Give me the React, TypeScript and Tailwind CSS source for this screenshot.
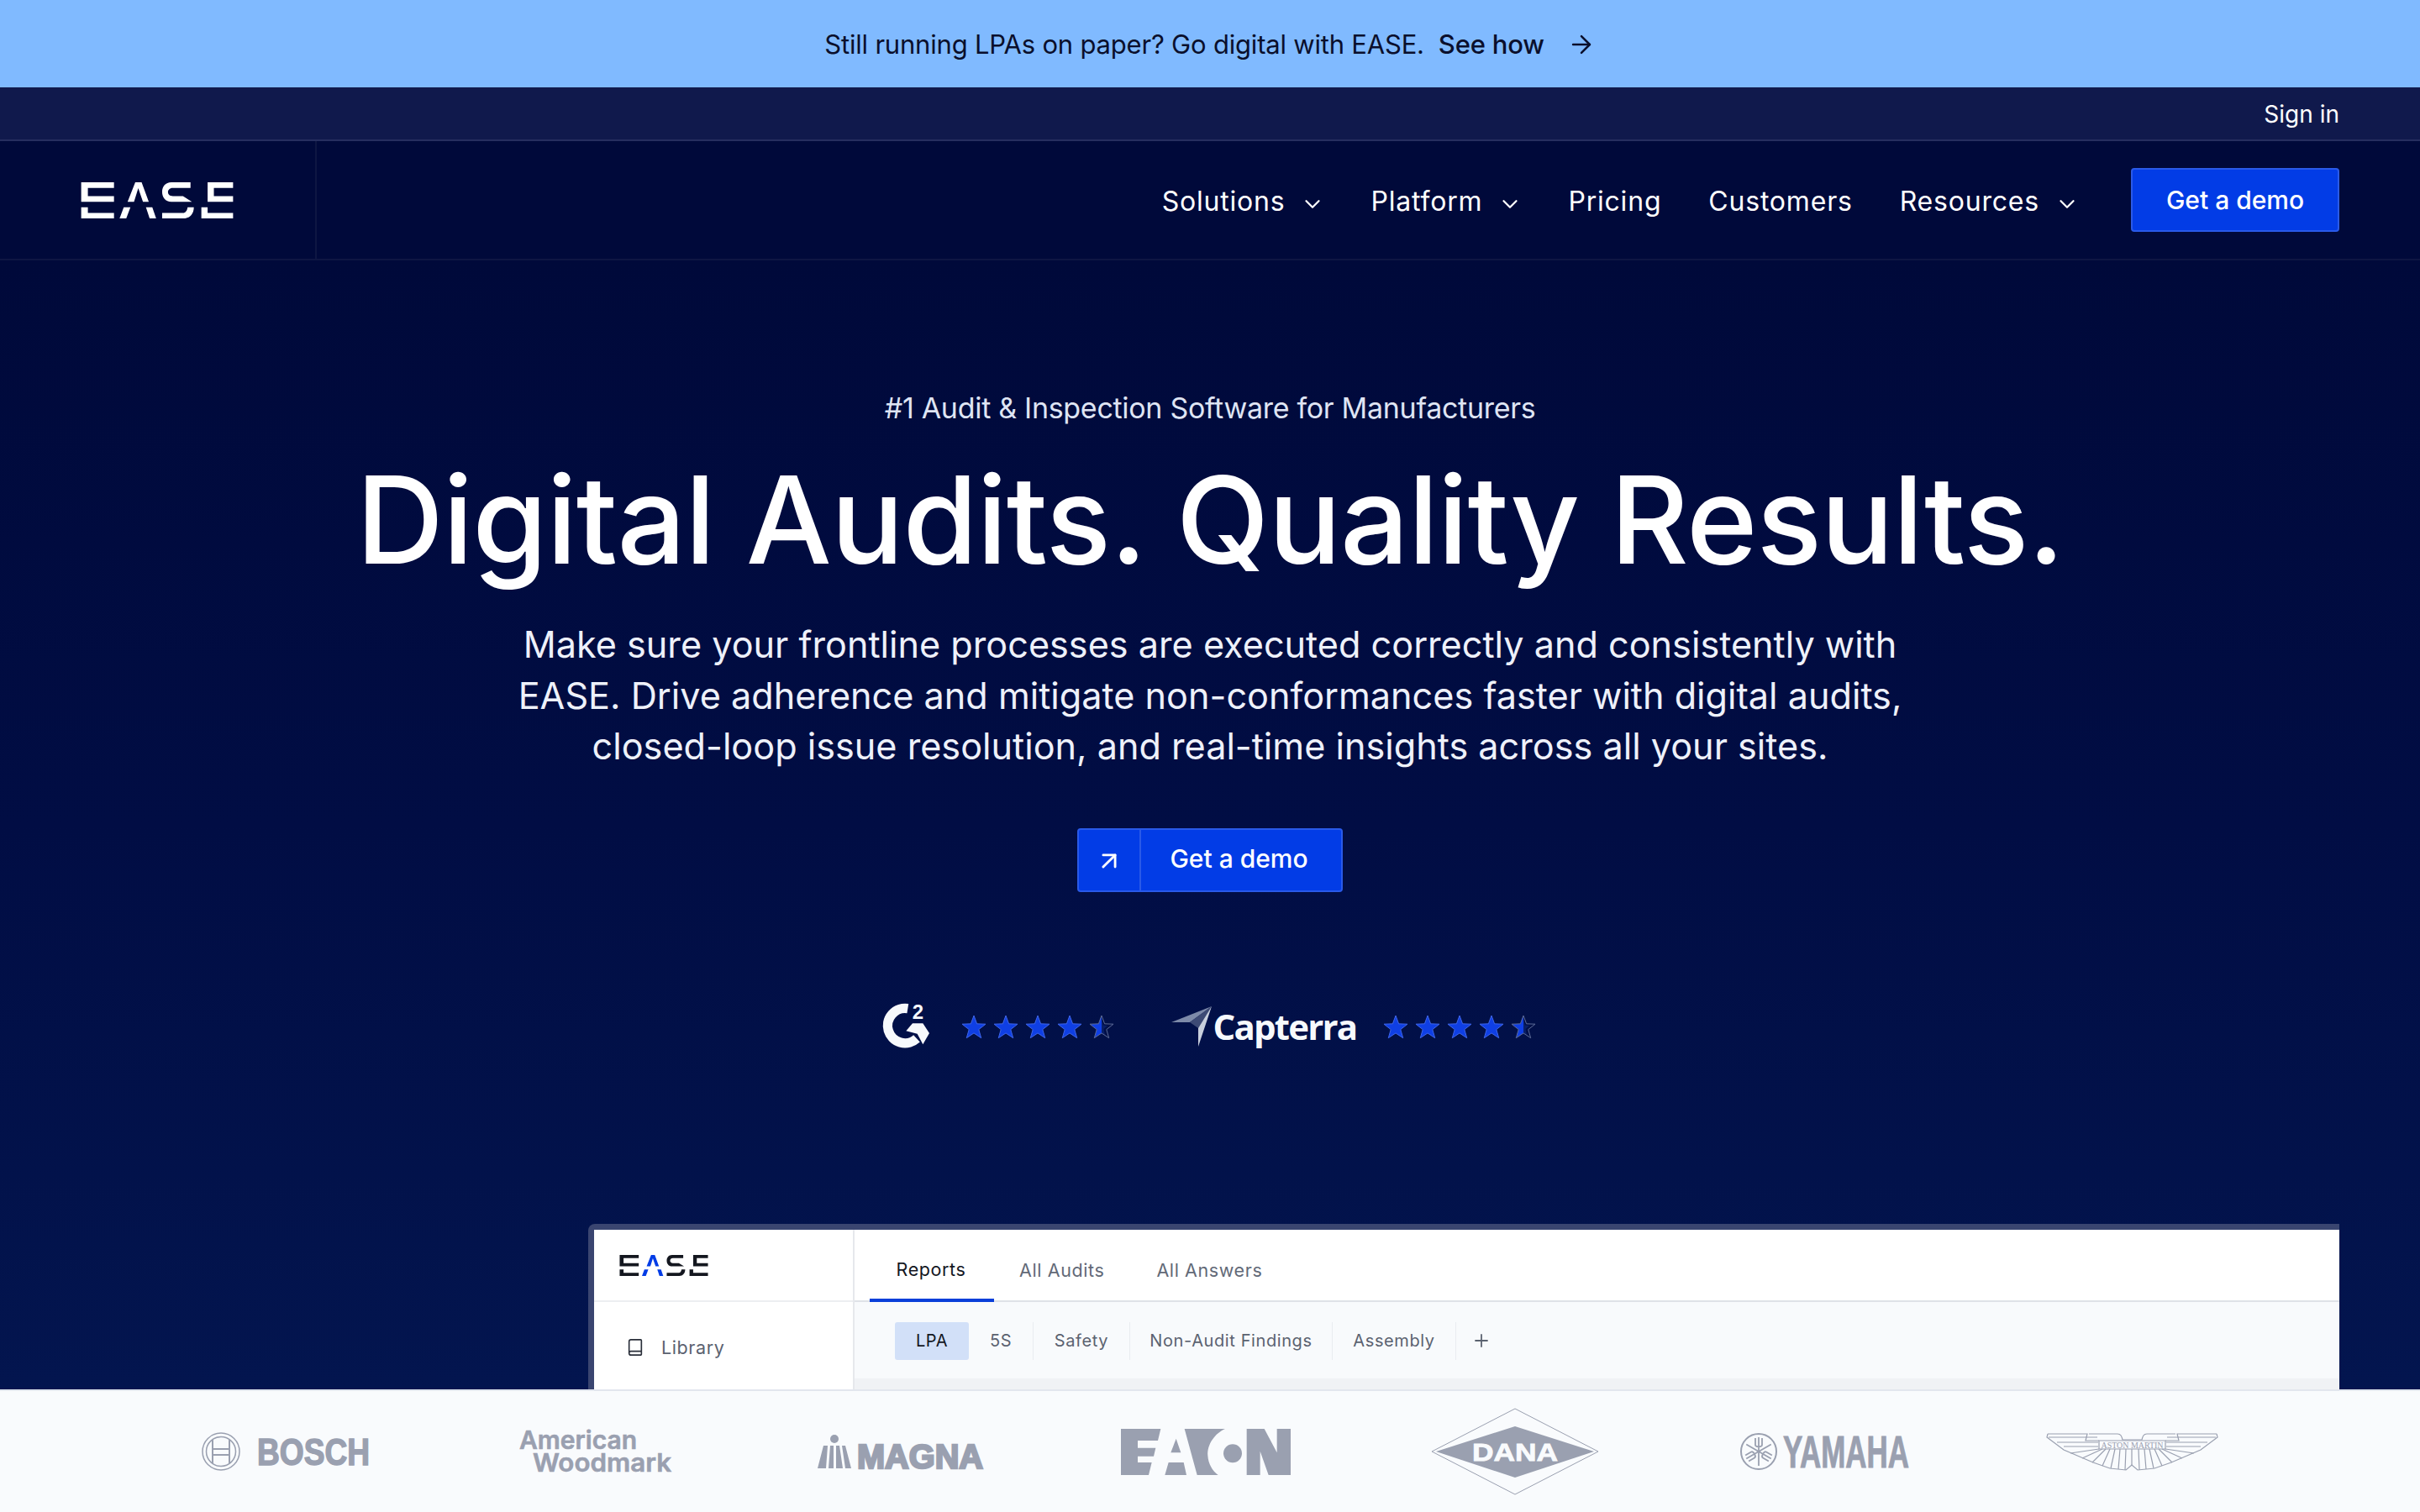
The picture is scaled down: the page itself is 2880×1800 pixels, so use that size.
import React from 'react';
import { ArrowRight, ArrowUpRight, Book, ChevronDown, Plus } from 'lucide-react';

function EaseLogo({ className, color, accent }: { className: string; color: string; accent: string }) {
  return (
    <svg viewBox="0 0 182 43.3" className={className} fill={color}>
      <path d="M0 0H39.3V6.7H8V16.7H39.3V23.3H0Z" />
      <path d="M0 30H8V36.8H39.3V43.3H0Z" />
      <path fill={accent} d="M55.6 23.3L64.8 0H72.4L81 23.3H74L68.4 7L63.3 23.3Z" />
      <path fill={accent} d="M46 43.3L51 30H59L54 43.3Z" />
      <path fill={accent} d="M77.6 30H85.2L89.8 43.3H82Z" />
      <path d="M131 0V6.7H110C105.500 6.7 104 9.500 104 11.700C104 14.500 106 16.700 110 16.700H122L132.700 23.300H108C101 23.300 97 18 97 11.500C97 5 101 0 108 0Z" />
      <path d="M97 36.800H122C125 36.800 127 34 127.500 30H135C135 38 130 43.300 123 43.300H97Z" />
      <path d="M151.500 0H182V6.700H159V16.700H182V23.300H151.500Z" />
      <path d="M144 30H151.500V36.800H182V43.300H144Z" />
    </svg>
  );
}

const STAR = 'M15 1L18.600 10.800L29 11.200L20.800 17.600L23.700 27.700L15 21.900L6.300 27.700L9.200 17.600L1 11.200L11.400 10.800Z';

function Stars() {
  return (
    <div className="flex gap-[8px]">
      {[0, 1, 2, 3].map((i) => (
        <svg key={i} viewBox="0 0 30 29" className="w-[30px] h-[29px]">
          <path d={STAR} fill="#0f3fe4" stroke="#3f66e8" strokeWidth="1" />
        </svg>
      ))}
      <svg viewBox="0 0 30 29" className="w-[30px] h-[29px]">
        <path d="M15 1L11.400 10.800L1 11.200L9.200 17.600L6.300 27.700L15 21.900Z" fill="#0f3fe4" />
        <path d="M15 6L15 21.900L19 24.500L17.500 17L22 13L17 12.500Z" fill="#0a1f66" />
        <path d={STAR} fill="none" stroke="#5c6a96" strokeWidth="1" />
      </svg>
    </div>
  );
}

function G2Logo() {
  return (
    <svg viewBox="33 30 165 165" className="w-[55px] h-[55px] overflow-visible">
      <path d="M118 50A62 62 0 1 0 150 157" fill="none" stroke="#f7f9fc" strokeWidth="34" />
      <path d="M135 103H172L195 138L172 178L152 140L112 130Z" fill="#f7f9fc" />
      <text x="134" y="88" fontSize="72" fontWeight="700" fill="#f7f9fc" fontFamily="'Liberation Sans', sans-serif">2</text>
    </svg>
  );
}

function CapterraMark() {
  return (
    <svg viewBox="0 0 48 48" className="w-[48px] h-[48px]">
      <path d="M0 19L22 19L48 0Z" fill="#7d8aa9" />
      <path d="M22 19L48 0L32 26Z" fill="#3d4a75" />
      <path d="M32 26L48 0L32 48Z" fill="#c8cfdd" />
    </svg>
  );
}

const logoText = "'Liberation Sans', sans-serif";

function BoschLogo() {
  return (
    <svg viewBox="0 0 202 46" className="w-[202px] h-[46px] overflow-visible" fill="none" stroke="#9aa0b0">
      <circle cx="23" cy="23" r="22" strokeWidth="1.500" />
      <circle cx="23" cy="23" r="17.500" strokeWidth="1.500" />
      <path d="M13 9V37M33 9V37M13 20H33M13 27H33" strokeWidth="2" />
      <text x="66" y="39" fontSize="44" fontWeight="700" fill="#9aa0b0" strokeWidth="1.500" textLength="134" lengthAdjust="spacingAndGlyphs" fontFamily={logoText}>BOSCH</text>
    </svg>
  );
}

function WoodmarkLogo() {
  return (
    <svg viewBox="0 0 184 52" className="w-[184px] h-[52px] overflow-visible" fill="#9aa0b0" stroke="#9aa0b0" strokeWidth="0.600" fontFamily="Inter, sans-serif" fontWeight="600">
      <text x="3" y="23" fontSize="30" textLength="140" lengthAdjust="spacingAndGlyphs">American</text>
      <text x="19" y="50" fontSize="30" textLength="165" lengthAdjust="spacingAndGlyphs">Woodmark</text>
    </svg>
  );
}

function MagnaLogo() {
  return (
    <svg viewBox="0 0 197 41" className="w-[197px] h-[41px] overflow-visible" fill="#9aa0b0">
      <circle cx="20" cy="5" r="5" />
      <path d="M0 40L7 13H12L10 40ZM13 40L15 13H19V40ZM22 40V13H26L30 40ZM33 40L29 13H33L40 40Z" />
      <text x="47" y="40" fontSize="40" fontWeight="700" stroke="#9aa0b0" strokeWidth="2.500" textLength="150" lengthAdjust="spacingAndGlyphs" fontFamily={logoText}>MAGNA</text>
    </svg>
  );
}

function EatonLogo() {
  return (
    <svg viewBox="48 30 606 165" className="w-[202px] h-[55px]" fill="#9aa0b0">
      <path d="M48 30H190L180 72H108V98H172L165 128H108V150H158L147 195H48Z" />
      <path d="M245 65L262 115H226Z" />
      <path d="M218 150H272L282 195H205Z" />
      <path d="M275 30H420C385 45 355 85 358 125C360 155 375 180 395 195H320Z" />
      <circle cx="447" cy="118" r="33" />
      <path d="M497 30H560L605 115V30H654V195H575L545 110V195H497Z" />
    </svg>
  );
}

function DanaLogo() {
  return (
    <svg viewBox="0 0 200 104" className="w-[200px] h-[104px] overflow-visible">
      <path d="M100 1L199 52L100 103L1 52Z" fill="none" stroke="#9aa0b0" strokeWidth="1" />
      <path d="M100 22L194 52L100 83L6 52Z" fill="#9aa0b0" />
      <text x="100" y="63" textAnchor="middle" fontSize="30" fontWeight="700" fill="#f9fbfd" stroke="#f9fbfd" strokeWidth="0.800" textLength="102" lengthAdjust="spacingAndGlyphs" fontFamily={logoText}>DANA</text>
    </svg>
  );
}

function YamahaLogo() {
  return (
    <svg viewBox="0 0 204 44" className="w-[204px] h-[44px] overflow-visible" fill="none" stroke="#9aa0b0">
      <circle cx="22" cy="22" r="21" strokeWidth="2" />
      {[0, 120, 240].map((deg) => (
        <g key={deg} transform={`rotate(${deg} 22 22)`} strokeWidth="1.800">
          <path d="M22 22V5M18 6V14C18 17 26 17 26 14V6M22 22V39" />
        </g>
      ))}
      <text x="51" y="41" fontSize="54" fontWeight="700" fill="#9aa0b0" strokeWidth="1" textLength="150" lengthAdjust="spacingAndGlyphs" fontFamily={logoText}>YAMAHA</text>
    </svg>
  );
}

function AstonLogo() {
  return (
    <svg viewBox="0 0 203 45" className="w-[203px] h-[45px] overflow-visible" fill="none" stroke="#9aa0b0" strokeWidth="1.200">
      <path d="M1 1H48L46 9H62M202 1H155L157 9H141" />
      <path d="M1 1L0 5L20 20L55 35L75 42L94 44L101 38L108 44L128 42L148 35L183 20L203 5L202 1" />
      <path d="M50 1H84C88 1 89 4 90 8H113C114 4 115 1 119 1H153" />
      <path d="M62 9H141V19H62Z" />
      <path d="M2 5H60M143 5H201M12 11H61M142 11H191M20 16H61M142 16H183" />
      <path d="M62 19L28 24M141 19L175 24M66 19L42 30M137 19L161 30M70 19L54 35M133 19L149 35M75 19L66 39M128 19L137 39M81 19L76 42M122 19L127 42M87 19L85 43M116 19L118 43M94 19L93 44M109 19L110 44M101 19V38" />
      <text x="101.500" y="17.500" textAnchor="middle" fontSize="11" fill="#9aa0b0" stroke="none" textLength="74" lengthAdjust="spacingAndGlyphs" fontFamily="'Liberation Serif', serif">ASTON MARTIN</text>
    </svg>
  );
}

export default function App() {
  const navItems = [
    { name: 'Solutions', menu: true },
    { name: 'Platform', menu: true },
    { name: 'Pricing', menu: false },
    { name: 'Customers', menu: false },
    { name: 'Resources', menu: true },
  ];

  return (
    <div className="w-[2880px] h-[1800px] overflow-hidden flex flex-col bg-[#00093a] font-['Inter',sans-serif]">
      {/* Promo banner */}
      <div className="h-[104px] shrink-0 bg-[#80baff] flex items-center justify-center text-[#0a0f2c] text-[31px] tracking-[-0.2px] pt-[2px]">
        <span>Still running LPAs on paper? Go digital with EASE.</span>
        <span className="ml-[17px] font-medium">See how</span>
        <ArrowRight className="ml-[27px] w-[34px] h-[34px]" strokeWidth={1.8} />
      </div>

      {/* Sign in bar */}
      <div className="h-[64px] shrink-0 bg-[#10194c] border-b-2 border-[#262e5f] flex items-center justify-end px-[96px] pt-[2px] text-white text-[28px]">
        Sign in
      </div>

      {/* Main nav */}
      <nav className="h-[142px] shrink-0 border-b-2 border-[#0e1643] flex">
        <div className="w-[377px] border-r-2 border-[#0e1643] pl-[96px] flex items-center">
          <EaseLogo className="w-[182px] h-[43px]" color="#ffffff" accent="#ffffff" />
        </div>
        <div className="flex-1 flex items-center justify-end pr-[96px] text-white text-[32px] tracking-[0.8px]">
          {navItems.map((item) => (
            <a key={item.name} href="#" className="mr-[56px] mt-[4px] flex items-center">
              {item.name}
              {item.menu && <ChevronDown className="ml-[18px] -mr-[2px] w-[30px] h-[30px] mt-[6px]" strokeWidth={1.8} />}
            </a>
          ))}
          <a href="#" className="ml-[7px] w-[248px] h-[76px] rounded-[4px] bg-[#023ce6] border-2 border-[#2a5ae8] flex items-center justify-center text-[30px] tracking-normal font-medium">
            Get a demo
          </a>
        </div>
      </nav>

      {/* Hero */}
      <section className="h-[1344px] shrink-0 overflow-hidden flex flex-col items-center bg-linear-to-b from-[#00093a] via-[#010d44] to-[#03154f]">
        <p className="mt-[152px] shrink-0 text-[34px] leading-[48px] text-[#dfe4f3] tracking-[-0.3px]">
          #1 Audit &amp; Inspection Software for Manufacturers
        </p>
        <h1 className="mt-[29px] shrink-0 text-[144px] leading-[160px] font-[450] tracking-[-1px] text-white whitespace-nowrap">
          Digital Audits. Quality Results.
        </h1>
        <p className="mt-[38px] shrink-0 w-[1700px] text-center text-[43.200px] leading-[60.500px] text-[#eef1fa]">
          Make sure your frontline processes are executed correctly and consistently with
          <br />
          EASE. Drive adherence and mitigate non-conformances faster with digital audits,
          <br />
          closed-loop issue resolution, and real-time insights across all your sites.
        </p>

        <a href="#" className="mt-[67px] shrink-0 w-[316px] h-[76px] rounded-[4px] bg-[#023ce6] border-2 border-[#2a5ae8] flex text-white">
          <span className="w-[74px] border-r-2 border-[#2a5ae8] flex items-center justify-center">
            <ArrowUpRight className="w-[34px] h-[34px] mt-[2px]" strokeWidth={2} />
          </span>
          <span className="flex-1 flex items-center justify-center pr-[5px] pb-[2px] text-[30px] font-medium">Get a demo</span>
        </a>

        {/* Ratings */}
        <div className="mt-[130px] shrink-0 h-[60px] flex items-center">
          <G2Logo />
          <div className="ml-[37px] mt-[2px]"><Stars /></div>
          <div className="ml-[68px]"><CapterraMark /></div>
          <span className="ml-[2px] text-[42px] font-bold text-[#f7f9fc] font-['Open_Sans',sans-serif] tracking-[-1.800px]">Capterra</span>
          <div className="ml-[32px] mt-[2px]"><Stars /></div>
        </div>

        {/* Product preview */}
        <div className="mt-[205px] self-end mr-[96px] w-[2084px] h-[300px] shrink-0 bg-[#3a4570] pl-[7px] pt-[7px] rounded-tl-[8px]">
          <div className="h-full flex bg-white">
            <aside className="w-[310px] shrink-0 border-r-2 border-[#e6e8ec] text-[#4b5563]">
              <div className="h-[86px] border-b-2 border-[#eceef1] pl-[30px] pt-[2px] flex items-center">
                <EaseLogo className="w-[106px] h-[25px]" color="#14171f" accent="#023ce6" />
              </div>
              <div className="mt-[38px] pl-[38px] flex items-center gap-[20px] text-[21.500px] tracking-[0.6px] text-[#5b6270]">
                <Book className="w-[22px] h-[22px] text-[#2a2f3a]" strokeWidth={1.8} />
                Library
              </div>
            </aside>
            <div className="flex-1 flex flex-col">
              <div className="h-[86px] shrink-0 border-b-2 border-[#dfe2e7] pl-[18px] flex gap-[30px] text-[21.500px] tracking-[0.6px]">
                <div className="w-[148px] h-[86px] pt-[14px] pr-[2px] border-b-4 border-[#0a3fd9] flex items-center justify-center text-[#14171f]">Reports</div>
                <div className="flex items-center pt-[14px] text-[#626977]">All Audits</div>
                <div className="flex items-center pt-[14px] pl-[32px] text-[#626977]">All Answers</div>
              </div>
              <div className="h-[91px] shrink-0 bg-[#f8fafc] pl-[48px] pt-[2px] flex items-center text-[20px] tracking-[0.6px] text-[#5b6270]">
                <span className="w-[88px] h-[45px] rounded-[3px] bg-[#d2e0f8] flex items-center justify-center text-[#14171f]">LPA</span>
                <span className="w-[77px] h-[45px] flex items-center justify-center border-r border-[#e9ecf0]">5S</span>
                <span className="w-[115px] h-[45px] flex items-center justify-center border-r border-[#e9ecf0]">Safety</span>
                <span className="w-[241px] h-[45px] flex items-center justify-center border-r border-[#e9ecf0]">Non-Audit Findings</span>
                <span className="w-[147px] h-[45px] flex items-center justify-center border-r border-[#e9ecf0]">Assembly</span>
                <Plus className="ml-[18px] w-[24px] h-[24px] text-[#5b6270]" strokeWidth={1.8} />
              </div>
              <div className="flex-1 bg-[#f0f2f5]" />
            </div>
          </div>
        </div>
      </section>

      {/* Customer logos */}
      <div className="flex-1 bg-[#f9fbfd] border-t-2 border-[#e2e6ee] flex items-center pl-[240px]">
        <div className="w-[375px]"><BoschLogo /></div>
        <div className="w-[358px]"><WoodmarkLogo /></div>
        <div className="w-[361px]"><MagnaLogo /></div>
        <div className="w-[369px]"><EatonLogo /></div>
        <div className="w-[368px]"><DanaLogo /></div>
        <div className="w-[365px]"><YamahaLogo /></div>
        <div><AstonLogo /></div>
      </div>
    </div>
  );
}
